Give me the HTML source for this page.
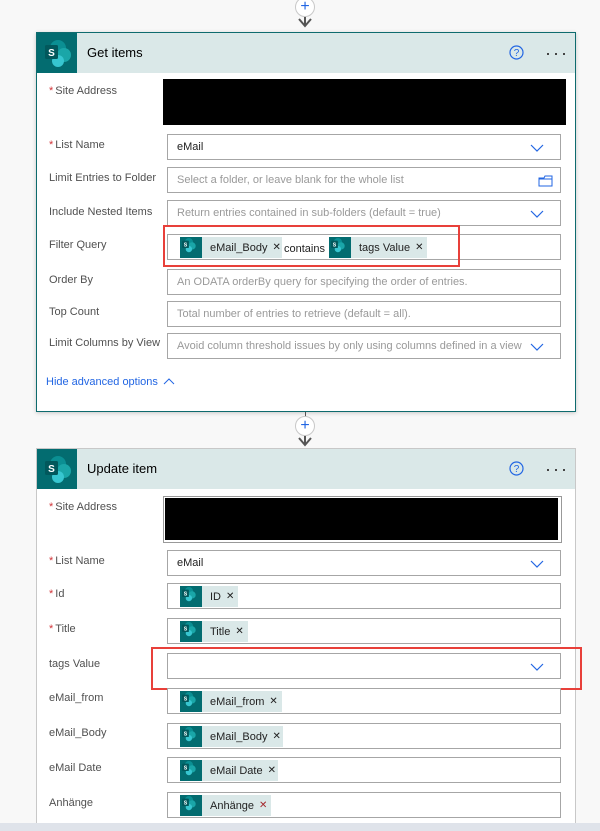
<!DOCTYPE html>
<html><head><meta charset="utf-8"><style>
*{margin:0;padding:0;box-sizing:border-box}
html{width:600px;height:831px;overflow:hidden}
body{width:600px;height:831px;background:#f8f8f8;position:relative;overflow:hidden;font-family:"Segoe UI","Liberation Sans",sans-serif;font-size:11px;color:#333}
.a{position:absolute}
.card{position:absolute;left:36px;width:540px;background:#fff}
.hdr{position:absolute;left:0;top:0;right:0;height:40px;background:#dae8e8}
.ico{position:absolute;left:0;top:0;width:40px;height:40px;background:#036c70}
.title{position:absolute;left:50px;top:12px;font-size:13px;color:#000}
.lbl{position:absolute;left:49px;font-size:11px;color:#505050}
.star{color:#d13438;margin-right:2px}
.in{position:absolute;left:167px;width:394px;height:26px;border:1px solid #a6a6a6;background:#fff}
.ph{position:absolute;left:9px;top:6px;color:#999;font-size:11px;white-space:nowrap}
.val{position:absolute;left:9px;top:6px;color:#222;font-size:11px}
.chev{position:absolute;right:16px;top:6px}
.chip{position:absolute;top:2px;height:21px;background:#dae8e8;display:flex;align-items:center;font-size:11px;color:#222;white-space:nowrap}
.ci{width:22px;height:21px;background:#036c70;position:relative;margin-right:8px}
.x{margin-left:5px;margin-right:5px;font-size:10px}
.red{position:absolute;border:2px solid #e8403a}
.blk{position:absolute;background:#000}
.dots{position:absolute;left:510px;top:20px;width:20px;height:2px}
.dots i{position:absolute;top:0;width:2px;height:2px;background:#444}
</style></head><body>
<svg width="0" height="0" style="position:absolute"><defs>
<symbol id="sp" viewBox="0 0 40 40"><circle cx="21" cy="15" r="8" fill="#0b8f93"/><circle cx="27" cy="22" r="7" fill="#1aa6a8"/><circle cx="21" cy="28" r="6" fill="#37c6d0"/><rect x="8" y="12" width="13" height="14" rx="1.5" fill="#02585c"/><text x="14.5" y="23" text-anchor="middle" font-family="Liberation Sans" font-weight="bold" font-size="10" fill="#fff">S</text></symbol>
<symbol id="ch" viewBox="0 0 14 8"><path d="M1 1 L7 7 L13 1" fill="none" stroke="#2266e3" stroke-width="1.2"/></symbol>
</defs></svg>

<div class="a" style="left:295px;top:-3px;width:20px;height:20px;border:1px solid #c8c8c8;border-radius:50%;background:#fff;color:#2266e3;font-size:16px;line-height:17px;text-align:center">+</div>
<svg class="a" style="left:298px;top:17px" width="14" height="12"><path d="M1 2 L7 9 L13 2 M7 0 V9" fill="none" stroke="#555" stroke-width="2"/></svg>

<div class="card" style="top:32px;height:380px;border:1px solid #0e6b6e;box-shadow:0 1px 4px rgba(0,0,0,.2)">
<div class="hdr"><div class="ico"><svg width="40" height="40"><use href="#sp"/></svg></div><div class="title">Get items</div>
<svg class="a" style="left:472px;top:12px" width="15" height="15"><circle cx="7.5" cy="7.5" r="6.5" fill="none" stroke="#2266e3" stroke-width="1.2"/><text x="7.5" y="11" text-anchor="middle" font-size="10" fill="#2266e3" font-family="Liberation Sans">?</text></svg>
<div class="dots"><i style="left:0"></i><i style="left:8px"></i><i style="left:16px"></i></div>
</div>
</div>
<div class="lbl" style="top:85px"><span class="star">*</span>Site Address</div>
<div class="blk" style="left:163px;top:79px;width:403px;height:46px"></div>
<div class="lbl" style="top:139px"><span class="star">*</span>List Name</div>
<div class="in" style="top:134px"><div class="val">eMail</div><svg class="chev" width="14" height="8" style="top:9px"><use href="#ch"/></svg></div>
<div class="lbl" style="top:172px">Limit Entries to Folder</div>
<div class="in" style="top:167px"><div class="ph">Select a folder, or leave blank for the whole list</div><svg class="a" style="right:7px;top:7px" width="15" height="12"><path d="M1 3 H6 L7 1 H14 V11 H1 Z M1 4 H14" fill="#fff" stroke="#2266e3" stroke-width="1"/></svg></div>
<div class="lbl" style="top:206px">Include Nested Items</div>
<div class="in" style="top:200px"><div class="ph">Return entries contained in sub-folders (default = true)</div><svg class="chev" width="14" height="8" style="top:9px"><use href="#ch"/></svg></div>
<div class="lbl" style="top:239px">Filter Query</div>
<div class="in" style="top:234px">
<div class="chip" style="left:12px;width:102px"><div class="ci"><svg width="22" height="21" viewBox="4 4 32 32"><use href="#sp"/></svg></div>eMail_Body<span class="x">✕</span></div>
<div class="a" style="left:116px;top:8px;color:#222">contains</div>
<div class="chip" style="left:161px;width:98px"><div class="ci"><svg width="22" height="21" viewBox="4 4 32 32"><use href="#sp"/></svg></div>tags Value<span class="x">✕</span></div>
</div>
<div class="red" style="left:163px;top:225px;width:297px;height:42px"></div>
<div class="lbl" style="top:274px">Order By</div>
<div class="in" style="top:269px"><div class="ph">An ODATA orderBy query for specifying the order of entries.</div></div>
<div class="lbl" style="top:306px">Top Count</div>
<div class="in" style="top:301px"><div class="ph">Total number of entries to retrieve (default = all).</div></div>
<div class="lbl" style="top:337px">Limit Columns by View</div>
<div class="in" style="top:333px"><div class="ph">Avoid column threshold issues by only using columns defined in a view</div><svg class="chev" width="14" height="8" style="top:9px;background:#fff"><use href="#ch"/></svg></div>
<div class="a" style="left:46px;top:376px;color:#2266e3;font-size:11px">Hide advanced options</div>
<svg class="a" style="left:163px;top:378px" width="12" height="7"><path d="M1 6 L6 1 L11 6" fill="none" stroke="#2266e3"/></svg>

<div class="a" style="left:305px;top:412px;width:1px;height:5px;background:#555"></div>
<div class="a" style="left:295px;top:416px;width:20px;height:20px;border:1px solid #c8c8c8;border-radius:50%;background:#fff;color:#2266e3;font-size:16px;line-height:17px;text-align:center">+</div>
<svg class="a" style="left:298px;top:436px" width="14" height="12"><path d="M1 2 L7 9 L13 2 M7 0 V9" fill="none" stroke="#555" stroke-width="2"/></svg>

<div class="card" style="top:448px;height:383px;border:1px solid #c8c8c8;border-bottom:none">
<div class="hdr"><div class="ico"><svg width="40" height="40"><use href="#sp"/></svg></div><div class="title">Update item</div>
<svg class="a" style="left:472px;top:12px" width="15" height="15"><circle cx="7.5" cy="7.5" r="6.5" fill="none" stroke="#2266e3" stroke-width="1.2"/><text x="7.5" y="11" text-anchor="middle" font-size="10" fill="#2266e3" font-family="Liberation Sans">?</text></svg>
<div class="dots"><i style="left:0"></i><i style="left:8px"></i><i style="left:16px"></i></div>
</div>
</div>
<div class="lbl" style="top:501px"><span class="star">*</span>Site Address</div>
<div class="in" style="left:163px;top:496px;width:399px;height:47px;border-color:#999"></div>
<div class="blk" style="left:165px;top:498px;width:393px;height:42px"></div>
<div class="lbl" style="top:555px"><span class="star">*</span>List Name</div>
<div class="in" style="top:550px"><div class="val">eMail</div><svg class="chev" width="14" height="8" style="top:9px"><use href="#ch"/></svg></div>
<div class="lbl" style="top:588px"><span class="star">*</span>Id</div>
<div class="in" style="top:583px"><div class="chip" style="left:12px;width:58px"><div class="ci"><svg width="22" height="21" viewBox="4 4 32 32"><use href="#sp"/></svg></div>ID<span class="x">✕</span></div></div>
<div class="lbl" style="top:623px"><span class="star">*</span>Title</div>
<div class="in" style="top:618px"><div class="chip" style="left:12px;width:68px"><div class="ci"><svg width="22" height="21" viewBox="4 4 32 32"><use href="#sp"/></svg></div>Title<span class="x">✕</span></div></div>
<div class="lbl" style="top:658px">tags Value</div>
<div class="in" style="top:653px"><svg class="chev" width="14" height="8" style="top:9px"><use href="#ch"/></svg></div>
<div class="red" style="left:151px;top:647px;width:431px;height:43px"></div>
<div class="lbl" style="top:692px">eMail_from</div>
<div class="in" style="top:688px"><div class="chip" style="left:12px;width:102px"><div class="ci"><svg width="22" height="21" viewBox="4 4 32 32"><use href="#sp"/></svg></div>eMail_from<span class="x">✕</span></div></div>
<div class="lbl" style="top:727px">eMail_Body</div>
<div class="in" style="top:723px"><div class="chip" style="left:12px;width:103px"><div class="ci"><svg width="22" height="21" viewBox="4 4 32 32"><use href="#sp"/></svg></div>eMail_Body<span class="x">✕</span></div></div>
<div class="lbl" style="top:762px">eMail Date</div>
<div class="in" style="top:757px"><div class="chip" style="left:12px;width:98px"><div class="ci"><svg width="22" height="21" viewBox="4 4 32 32"><use href="#sp"/></svg></div>eMail Date<span class="x">✕</span></div></div>
<div class="lbl" style="top:797px">Anhänge</div>
<div class="in" style="top:792px"><div class="chip" style="left:12px;width:91px"><div class="ci"><svg width="22" height="21" viewBox="4 4 32 32"><use href="#sp"/></svg></div>Anhänge<span class="x" style="color:#a4262c">✕</span></div></div>

<div class="a" style="left:0;top:823px;width:600px;height:8px;background:#dfe3ea"></div>
</body></html>
